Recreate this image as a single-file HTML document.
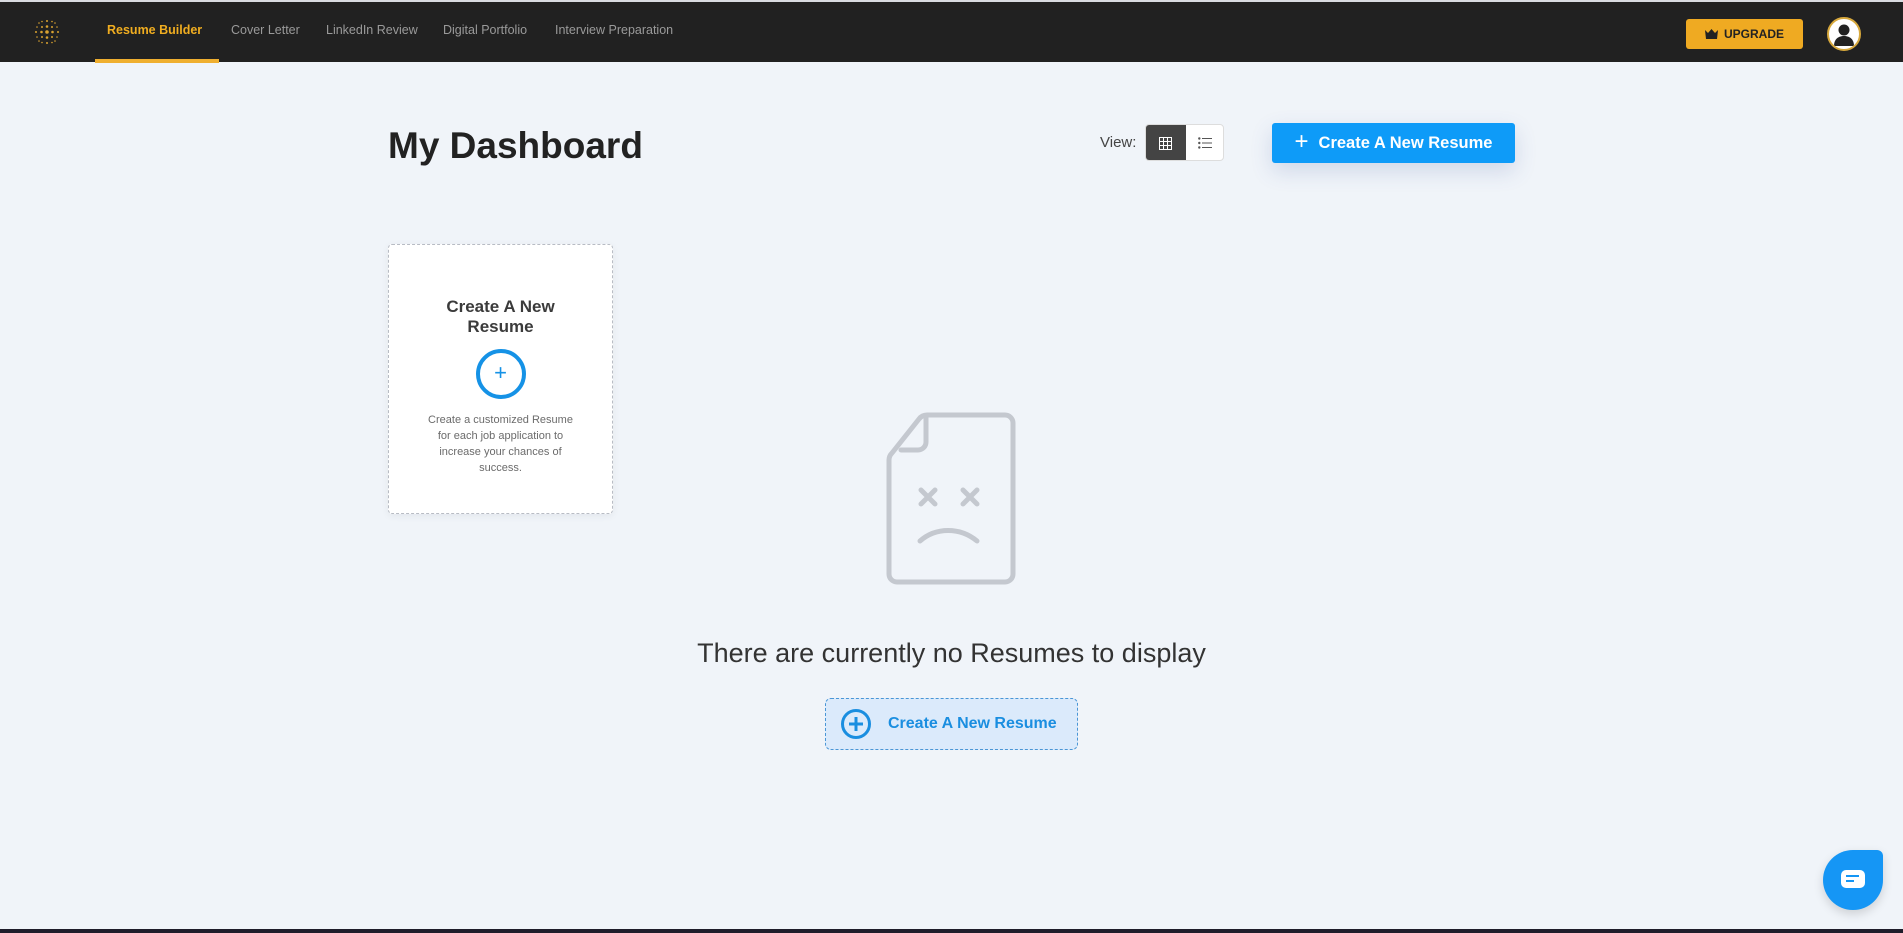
<!DOCTYPE html>
<html><head><meta charset="utf-8">
<style>
*{box-sizing:border-box;margin:0;padding:0}
body{width:1903px;height:933px;background:#f0f4f9;font-family:"Liberation Sans",sans-serif;position:relative;overflow:hidden}
.nav{position:absolute;left:0;top:0;width:1903px;height:62px;background:#212121;border-top:2px solid #d9dbe0}
.nav a{position:absolute;top:21px;font-size:12.5px;color:#9a9a9a;text-decoration:none;white-space:nowrap}
.nav a.act{color:#f0ad20;font-weight:bold}
.ul{position:absolute;left:95px;top:57px;width:124px;height:4px;background:#efaf30}
.upg{position:absolute;left:1686px;top:17px;width:117px;height:30px;background:#efaa22;border-radius:3px;font-size:12px;font-weight:bold;color:#222;display:flex;align-items:center;justify-content:center;gap:6px}
.av{position:absolute;left:1827px;top:15px;width:34px;height:34px;border-radius:50%;background:#fff;border:2px solid #d7a83c;overflow:hidden}
h1{position:absolute;left:388px;top:125px;font-size:37px;font-weight:bold;color:#222}
.view{position:absolute;left:1100px;top:134px;font-size:15px;color:#444}
.tog{position:absolute;left:1145px;top:124px;width:79px;height:37px;border:1px solid #ddd;border-radius:4px;background:#fff;overflow:hidden}
.tog .on{position:absolute;left:0;top:0;width:40px;height:37px;background:#444}
.btn{position:absolute;left:1272px;top:123px;width:243px;height:40px;background:#0e9bf8;border-radius:3px;color:#fff;font-weight:bold;font-size:16.5px;display:flex;align-items:center;justify-content:center;gap:10px;box-shadow:0 8px 22px rgba(60,90,160,.18)}
.card{position:absolute;left:388px;top:244px;width:225px;height:270px;background:#fff;border:1px dashed #b8bcc4;border-radius:4px;text-align:center;box-shadow:0 2px 8px rgba(0,0,0,.06)}
.card .t{margin-top:52px;font-size:17px;font-weight:bold;color:#3b3b3b;line-height:20px}
.card .c{margin:12px auto 0;width:50px;height:50px;border:4px solid #1592e6;border-radius:50%;color:#1592e6;font-size:22px;line-height:40px}
.card .d{margin-top:13px;font-size:11px;color:#6b6b6b;line-height:16px;padding:0 34px}
.msg{position:absolute;left:0;width:1903px;top:638px;text-align:center;font-size:27px;color:#333}
.b2{position:absolute;left:825px;top:698px;width:253px;height:52px;border:1px dashed #4a96d6;border-radius:6px;background:#dbeafb;color:#1a8ee0;font-weight:bold;font-size:16px;display:flex;align-items:center;padding-left:14px;gap:16px}
.chat{position:absolute;left:1823px;top:850px;width:60px;height:60px;background:#1596f5;border-radius:30px 6px 30px 30px;box-shadow:0 4px 10px rgba(0,0,0,.15)}
.bot{position:absolute;left:0;top:929px;width:1903px;height:4px;background:#1e1c2a}
</style></head><body>
<div class="nav">
<svg style="position:absolute;left:33px;top:16px" width="28" height="28" viewBox="0 0 28 28">
<g fill="#d9a230">
<circle cx="14" cy="14" r="1.8"/><circle cx="14" cy="3" r="1"/><circle cx="14" cy="25" r="1"/><circle cx="3" cy="14" r="1"/><circle cx="25" cy="14" r="1"/>
<circle cx="14" cy="8.5" r="1.3"/><circle cx="14" cy="19.5" r="1.3"/><circle cx="8.5" cy="14" r="1.3"/><circle cx="19.5" cy="14" r="1.3"/>
<circle cx="9" cy="9" r="1"/><circle cx="19" cy="9" r="1"/><circle cx="9" cy="19" r="1"/><circle cx="19" cy="19" r="1"/>
<circle cx="6" cy="5" r=".8"/><circle cx="22" cy="5" r=".8"/><circle cx="6" cy="23" r=".8"/><circle cx="22" cy="23" r=".8"/>
<circle cx="4" cy="9" r=".8"/><circle cx="24" cy="9" r=".8"/><circle cx="4" cy="19" r=".8"/><circle cx="24" cy="19" r=".8"/>
<circle cx="9" cy="3.5" r=".8"/><circle cx="19" cy="3.5" r=".8"/><circle cx="9" cy="24.5" r=".8"/><circle cx="19" cy="24.5" r=".8"/>
</g></svg>
<a class="act" style="left:107px">Resume Builder</a>
<a style="left:231px">Cover Letter</a>
<a style="left:326px">LinkedIn Review</a>
<a style="left:443px">Digital Portfolio</a>
<a style="left:555px">Interview Preparation</a>
<div class="ul"></div>
<div class="upg"><svg width="13" height="10" viewBox="0 0 13 10"><path d="M0 1l3 3 3.5-4 3.5 4 3-3-1 9H1z" fill="#222"/></svg>UPGRADE</div>
<div class="av"><svg width="30" height="30" viewBox="0 0 30 30"><circle cx="15" cy="11" r="5.5" fill="#222"/><path d="M5 27c0-7 4.5-10 10-10s10 3 10 10z" fill="#222"/></svg></div>
</div>
<h1>My Dashboard</h1>
<div class="view">View:</div>
<div class="tog"><div class="on"></div>
<svg style="position:absolute;left:13px;top:12px" width="13" height="13" viewBox="0 0 13 13"><rect x=".5" y=".5" width="12" height="12" fill="none" stroke="#fff"/><path d="M4.5 0v13M8.5 0v13M0 4.5h13M0 8.5h13" stroke="#fff"/></svg>
<svg style="position:absolute;left:52px;top:12px" width="14" height="12" viewBox="0 0 14 12"><g fill="#555"><circle cx="1.3" cy="1.5" r="1.2"/><circle cx="1.3" cy="6" r="1.2"/><circle cx="1.3" cy="10.5" r="1.2"/><rect x="4" y="1" width="10" height="1"/><rect x="4" y="5.5" width="10" height="1"/><rect x="4" y="10" width="10" height="1"/></g></svg>
</div>
<div class="btn"><span style="font-size:24px;font-weight:normal;margin-top:-3px">+</span>Create A New Resume</div>
<div class="card"><div class="t">Create A New<br>Resume</div><div class="c">+</div>
<div class="d">Create a customized Resume for each job application to increase your chances of success.</div></div>
<svg style="position:absolute;left:882px;top:410px" width="140" height="178" viewBox="0 0 140 178">
<g fill="none" stroke="#c4c8cf" stroke-width="5" stroke-linecap="round" stroke-linejoin="round">
<path d="M45 5h78a8 8 0 0 1 8 8v151a8 8 0 0 1-8 8H15a8 8 0 0 1-8-8V50a10 10 0 0 1 3-7L37 9a10 10 0 0 1 8-4z"/>
<path d="M44 6v26a8 8 0 0 1-8 8H19"/>
<path d="M39 80l14 14M53 80L39 94M81 80l14 14M95 80L81 94"/>
<path d="M38 131c16-14 40-14 57 0"/></g></svg>
<div class="msg">There are currently no Resumes to display</div>
<div class="b2"><svg width="32" height="32" viewBox="0 0 32 32"><circle cx="16" cy="16" r="13.5" fill="none" stroke="#1a8ee0" stroke-width="3"/><path d="M16 9v14M9 16h14" stroke="#1a8ee0" stroke-width="3"/></svg>Create A New Resume</div>
<div class="chat"><svg style="position:absolute;left:18px;top:20px" width="24" height="18" viewBox="0 0 24 18"><rect x="0" y="0" width="24" height="18" rx="5" fill="#fff"/><path d="M5 6h13M5 11h8" stroke="#1596f5" stroke-width="2"/></svg></div>
<div class="bot"></div>
</body></html>
